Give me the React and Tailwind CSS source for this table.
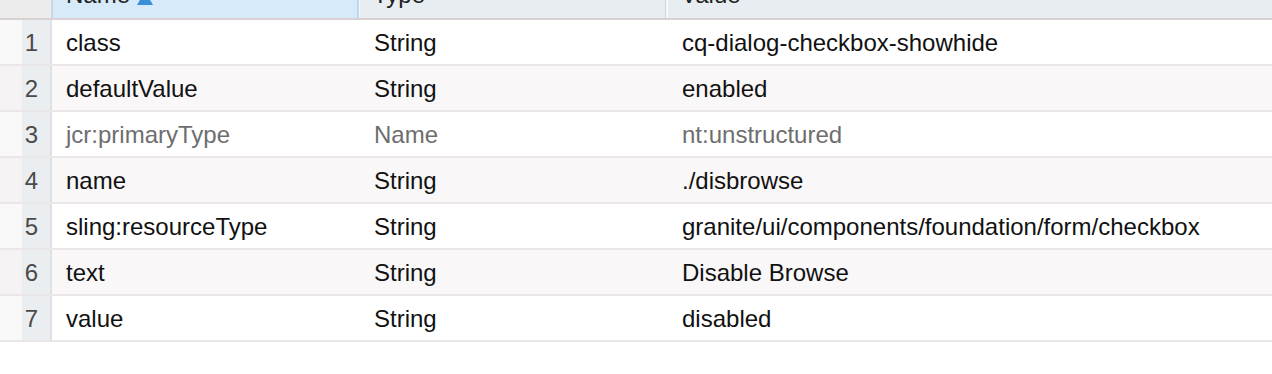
import React from 'react';

const rows = [
  { name: 'class', type: 'String', value: 'cq-dialog-checkbox-showhide' },
  { name: 'defaultValue', type: 'String', value: 'enabled' },
  { name: 'jcr:primaryType', type: 'Name', value: 'nt:unstructured', muted: true },
  { name: 'name', type: 'String', value: './disbrowse' },
  { name: 'sling:resourceType', type: 'String', value: 'granite/ui/components/foundation/form/checkbox' },
  { name: 'text', type: 'String', value: 'Disable Browse' },
  { name: 'value', type: 'String', value: 'disabled' },
];

const App = () => {
  return (
    <div
      className="w-[1272px] h-[374px] overflow-hidden bg-white text-[24px] text-[#111]"
      style={{ fontFamily: '"Liberation Sans", Arial, Helvetica, sans-serif' }}
    >
      {/* header, mostly scrolled out of view */}
      <div className="flex h-[47px] -mt-[27px] border-b-2 border-[#d9d0d2]">
        <div className="w-[52px] shrink-0 bg-[#ececec] border-r border-[#d6d6d6]" />
        <div className="w-[307px] shrink-0 bg-[#d7eaf9] border-l border-r-2 border-[#bcd9f1] pl-[13px] pt-[10px] leading-[24px] text-[#222] flex items-start">
          <span>Name</span>
          <svg className="ml-[7px] mt-[8px]" width="16" height="14" viewBox="0 0 16 14">
            <path d="M0 14 L8 0 L16 14 Z" fill="#3a8fd9" />
          </svg>
        </div>
        <div className="w-[1px] shrink-0 bg-[#f4f6f8]" />
        <div className="w-[306px] shrink-0 bg-[#e8edf1] border-r border-[#cfd4d9] pl-[13px] pt-[10px] leading-[24px] text-[#222]">
          Type
        </div>
        <div className="w-[2px] shrink-0 bg-[#f7f8f9]" />
        <div className="flex-1 bg-[#e8edf1] pl-[13px] pt-[10px] leading-[24px] text-[#222]">
          Value
        </div>
      </div>

      {rows.map((row, i) => (
        <div
          key={row.name}
          className={`flex h-[46px] border-b-2 border-[#ebe6e7] ${i % 2 === 1 ? 'bg-[#f9f7f7]' : 'bg-white'}`}
        >
          <div className="w-[52px] shrink-0 flex">
            <div className={`w-[22px] ${i % 2 === 1 ? 'bg-[#f5f3f3]' : 'bg-[#f9f9f9]'}`} />
            <div className="flex-1 bg-[#ebeef1] border-r-2 border-[#dde1e5] flex items-center justify-end pr-[12px] pt-[2px] text-[#4a4a4a]">
              {i + 1}
            </div>
          </div>
          <div className={`w-[308px] shrink-0 flex items-center pl-[14px] pt-[2px] ${row.muted ? 'text-[#6e6e6e]' : ''}`}>
            {row.name}
          </div>
          <div className={`w-[308px] shrink-0 flex items-center pl-[14px] pt-[2px] ${row.muted ? 'text-[#6e6e6e]' : ''}`}>
            {row.type}
          </div>
          <div className={`flex-1 flex items-center pl-[14px] pt-[2px] ${row.muted ? 'text-[#6e6e6e]' : ''}`}>
            {row.value}
          </div>
        </div>
      ))}
    </div>
  );
};

export default App;
